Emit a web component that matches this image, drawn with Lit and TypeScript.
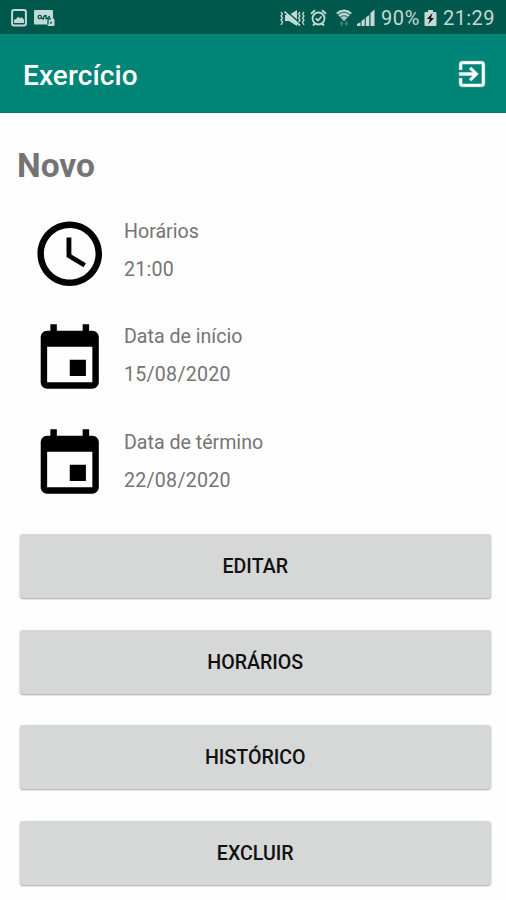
import { LitElement, html, css, svg } from "lit";
import { customElement } from "lit/decorators.js";

const clock = svg`<path d="M11.99 2C6.47 2 2 6.48 2 12s4.47 10 9.99 10C17.52 22 22 17.52 22 12S17.52 2 11.99 2zM12 20c-4.42 0-8-3.58-8-8s3.58-8 8-8 8 3.58 8 8-3.58 8-8 8zM12.5 7H11v6l5.25 3.15.75-1.23-4.5-2.67z"/>`;
const event = svg`<path d="M17 12h-5v5h5v-5zM16 1v2H8V1H6v2H5c-1.11 0-1.99.9-1.99 2L3 19c0 1.1.89 2 2 2h14c1.1 0 2-.9 2-2V5c0-1.1-.9-2-2-2h-1V1h-2zm3 18H5V8h14v11z"/>`;

const details = [
  { icon: clock, label: "Horários", value: "21:00" },
  { icon: event, label: "Data de início", value: "15/08/2020" },
  { icon: event, label: "Data de término", value: "22/08/2020" },
];
const actions = ["Editar", "Horários", "Histórico", "Excluir"];

@customElement("status-bar")
class StatusBar extends LitElement {
  static styles = css`
    :host {
      display: flex;
      align-items: center;
      height: 34px;
      box-sizing: border-box;
      padding: 1px 10px 0 11px;
      background: #00574b;
      color: #c3d9d5;
      font: 400 20px/34px Roboto, sans-serif;
    }
    svg { display: block; fill: currentColor; flex: none; }
    .note { margin-left: 7px; }
    .space { flex: 1; }
    .alarm { margin-left: 4px; }
    .wifi { margin-left: 9px; }
    .signal { margin-left: 5px; }
    .pct { margin-left: 6px; width: 42px; white-space: nowrap; letter-spacing: 0.6px; }
    .battery { margin-left: 1px; }
    .time { margin-left: 6px; width: 53px; white-space: nowrap; letter-spacing: 0.4px; }
  `;
  render() {
    return html`
      <svg width="16" height="18" viewBox="0 0 16 18">
        <rect x="1.1" y="1.1" width="13.8" height="15.4" rx="2" fill="none" stroke="currentColor" stroke-width="2"/>
        <path d="M3 14V11l2-1 2-2.300 2 1.500 1.500-1L13 10.500V14z"/>
      </svg>
      <svg class="note" width="21" height="18" viewBox="0 0 21 18">
        <path d="M0 2q0-1 1-1h17q1 0 1 1v7h-.5q2 .5 2 2v5q0 1-1 1h-5q-1 0-1-1v-.5H1q-1 0-1-1z"/>
        <g fill="none" stroke="#00574b" stroke-width="1.300">
          <circle cx="5.800" cy="8" r="1.700"/><path d="M7.500 8.500q.5 1.500 2 1.500 0-3.500 2.500-3.500v3h2q0-2 2-2"/>
          <path d="M14 15.500V11l2-1.500h1M17 12.500v2.500"/>
        </g>
      </svg>
      <span class="space"></span>
      <svg width="26" height="18" viewBox="0 0 26 18">
        <path d="M5 6h4l8-5v16l-8-5H5z"/>
        <path d="M5 1l16 14" stroke="#00574b" stroke-width="1.600"/>
        <path d="M4.500 2.700l15.500 13.800" fill="none" stroke="currentColor" stroke-width="1.700"/>
        <path d="M1 3l1.500 2L1 7l1.500 2L1 11l1.500 2L1 16M20 3l-1.500 2L20 7l-1.500 2L20 11l-1.500 2M24 3l-1.500 2L24 7l-1.500 2L24 11l-1.500 2L24 16" fill="none" stroke="currentColor" stroke-width="1.300"/>
      </svg>
      <svg class="alarm" width="17" height="18" viewBox="0 0 17 18">
        <g fill="none" stroke="currentColor" stroke-width="1.800">
          <circle cx="8.500" cy="9.500" r="6"/>
          <path d="M1 4.700l4-3.500M16 4.700l-4-3.500M3 16.500l2-2M14 16.500l-2-2M5.700 9.300L8 11.500l3.500-4"/>
        </g>
      </svg>
      <svg class="wifi" width="16" height="18" viewBox="0 0 16 18">
        <path d="M.3 4q7.700-6.500 15.400 0L8 12z" opacity="0.35"/>
        <g fill="none" stroke="currentColor" stroke-width="1.700">
          <path d="M.8 4.500q7.200-6 14.400 0M3 7q5-4 10 0M5.300 9.300q2.700-2 5.400 0"/>
        </g>
        <path d="M6.300 10.200L8 9.500l1.700.7L8 12z"/>
        <path d="M5.600 12l2 2.700H6.400V17H4.800v-2.300H3.600zM10.400 17l2-2.700h-1.200V12H9.600v2.300H8.400z" fill="#398a80"/>
      </svg>
      <svg class="signal" width="18" height="18" viewBox="0 0 18 18">
        <path d="M0 17v-2l3.500-1.800V17zM4.500 17v-5l3.200-2.500V17zM8.800 17V8.500l3.500-2.500v11zM13.500 17V4L17.500 .5V17z"/>
      </svg>
      <span class="pct">90%</span>
      <svg class="battery" width="13" height="18" viewBox="0 0 13 18">
        <path d="M4 1h5v2h2.500q1 0 1 1v12q0 1-1 1h-10q-1 0-1-1V4q0-1 1-1H4z"/>
        <path d="M8.500 4L3 10h3l-2 5.500L10 9H7z" fill="#111"/>
      </svg>
      <span class="time">21:29</span>
    `;
  }
}

@customElement("app-root")
class AppRoot extends LitElement {
  static styles = css`
    :host {
      display: flex;
      flex-direction: column;
      height: 900px;
      overflow: hidden;
      background: #fefefe;
      color: #747474;
      font-family: Roboto, sans-serif;
    }
    header {
      display: flex;
      align-items: center;
      justify-content: space-between;
      box-sizing: border-box;
      height: 79px;
      flex: none;
      padding: 0 17px 0 23px;
      background: #008577;
      border-bottom: 1px solid #107469;
      color: #fff;
    }
    header h1 { margin: 5px 0 0; font-size: 28px; font-weight: 500; line-height: 32px; letter-spacing: 0.1px; }
    header svg { display: block; margin-top: 1px; fill: #fff; stroke: #fff; stroke-width: 0.300; }
    h2 { margin: 33px 0 0 17px; font-size: 33.500px; line-height: 40px; font-weight: 700; }
    .details { display: flex; flex-direction: column; gap: 28px; margin: 29px 0 0 30.500px; }
    .row { display: flex; height: 77.500px; }
    .row svg { width: 77.500px; height: 77.500px; fill: #000; flex: none; }
    .texts { margin-left: 16px; font-size: 19.600px; line-height: 38px; margin-top: -2.500px; }
    .value { letter-spacing: 0.250px; }
    .actions { display: flex; flex-direction: column; gap: 31.700px; margin: 30.500px 15px 0 19.500px; }
    button {
      height: 64px;
      border: 0;
      border-radius: 3px;
      padding: 2px 0 0;
      background: #d6d7d7;
      box-shadow: 0 1px 2px rgba(0, 0, 0, 0.35);
      color: #111;
      font: 500 19.600px/62px Roboto, sans-serif;
      text-transform: uppercase;
    }
  `;
  render() {
    return html`
      <status-bar></status-bar>
      <header>
        <h1>Exercício</h1>
        <svg width="34" height="34" viewBox="0 0 24 24"><path d="M10.090 15.590L11.500 17l5-5-5-5-1.410 1.410L12.670 11H3v2h9.670l-2.580 2.590zM19 3H5c-1.110 0-2 .9-2 2v4h2V5h14v14H5v-4H3v4c0 1.100.89 2 2 2h14c1.100 0 2-.9 2-2V5c0-1.100-.9-2-2-2z"/></svg>
      </header>
      <h2>Novo</h2>
      <div class="details">
        ${details.map((d) => html`
          <div class="row">
            <svg viewBox="0 0 24 24">${d.icon}</svg>
            <div class="texts"><div>${d.label}</div><div class="value">${d.value}</div></div>
          </div>`)}
      </div>
      <div class="actions">${actions.map((a) => html`<button>${a}</button>`)}</div>
    `;
  }
}
